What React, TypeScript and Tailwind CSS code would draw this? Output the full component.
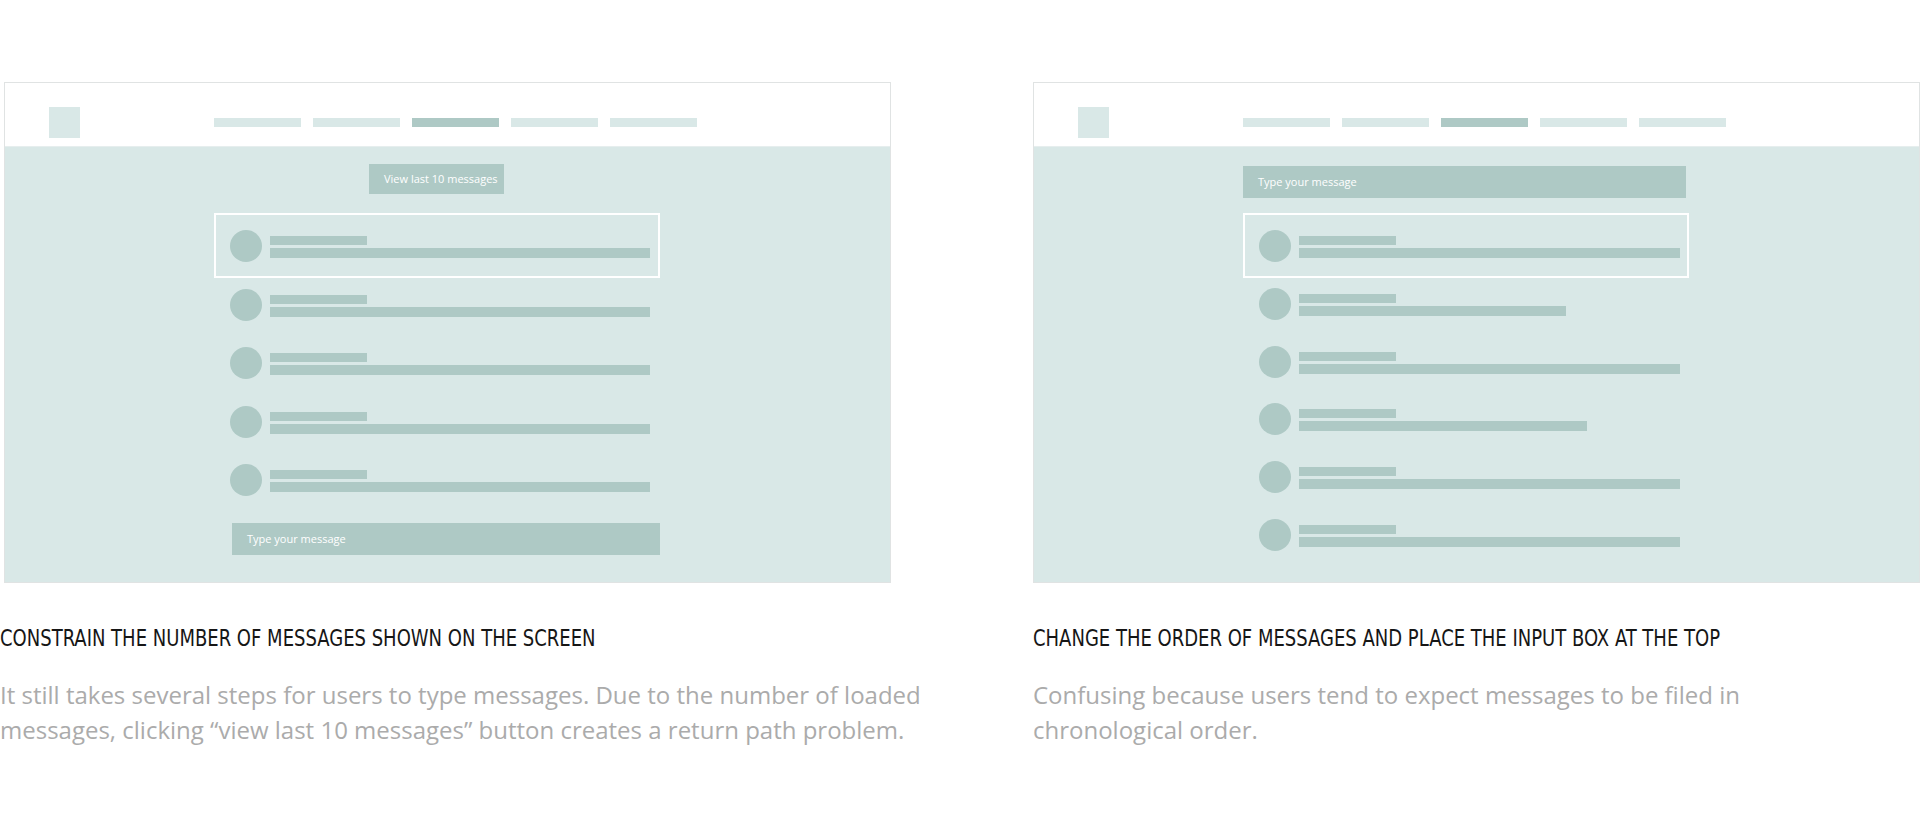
const TEAL = "bg-[#d9e8e7]";
const DARK = "bg-[#aec9c5]";

const Header = () => (
  <div className="h-[64px] pt-4 flex items-center bg-white border-b border-[#e6eeee]">
    <div className={`w-[31px] h-[31px] ml-[44px] ${TEAL}`} />
    <div className="flex gap-[12px] ml-[134px]">
      {[0, 1, 2, 3, 4].map((i) => (
        <div key={i} className={`w-[87px] h-[9px] ${i === 2 ? DARK : TEAL}`} />
      ))}
    </div>
  </div>
);

const MessageRow = ({ width, selected }: { width: number; selected?: boolean }) => (
  <div
    className={
      selected
        ? "w-[446px] -mt-[17px] -mb-[16px] pt-[15px] pb-[14px] pl-[14px] pr-[8px] border-2 border-white flex gap-[8px]"
        : "w-[446px] pl-[16px] pr-[10px] flex gap-[8px]"
    }
  >
    <div className={`w-[32px] h-[32px] rounded-full shrink-0 ${DARK}`} />
    <div className="flex flex-col pt-[6px] gap-[3px]">
      <div className={`w-[97px] h-[9px] ${DARK}`} />
      <div className={`h-[10px] ${DARK}`} style={{ width }} />
    </div>
  </div>
);

const Input = ({ w }: { w: string }) => (
  <div className={`${w} h-[32px] ${DARK} flex items-center pl-[15px] text-[11px] text-white font-['Open_Sans',sans-serif]`}>
    Type your message
  </div>
);

const Frame = ({ children }: { children: React.ReactNode }) => (
  <div className={`w-[887px] h-[501px] border border-[#e0e3e3] ${TEAL} flex flex-col`}>
    <Header />
    {children}
  </div>
);

const Caption = ({ title, lines }: { title: string; lines: string[] }) => (
  <div className="mt-[40px]">
    <h3 className="text-[23px] leading-[30px] text-[#161616] font-['DejaVu_Sans_Condensed','DejaVu_Sans',sans-serif] [font-stretch:condensed] font-light whitespace-nowrap scale-x-[0.87] origin-left">
      {title}
    </h3>
    <p className="mt-[24px] text-[24px] leading-[35px] text-[#ababab] font-['Open_Sans',sans-serif] whitespace-nowrap">
      {lines.map((l, i) => (
        <span key={i} className="block">{l}</span>
      ))}
    </p>
  </div>
);

export default function App() {
  return (
    <div className="w-[1920px] h-[820px] bg-white flex pt-[82px] overflow-hidden">
      <div className="w-[1033px] shrink-0">
        <div className="ml-[4px]">
          <Frame>
            <div className="pl-[209px] pt-[17px] flex flex-col">
              <div className={`ml-[155px] w-[135px] h-[30px] ${DARK} flex items-center pl-[15px] text-[11px] text-white font-['Open_Sans',sans-serif]`}>
                View last 10 messages
              </div>
              <div className="mt-[36px] flex flex-col gap-[26.5px]">
                <MessageRow width={380} selected />
                <MessageRow width={380} />
                <MessageRow width={380} />
                <MessageRow width={380} />
                <MessageRow width={380} />
              </div>
              <div className="mt-[27px] ml-[18px]">
                <Input w="w-[428px]" />
              </div>
            </div>
          </Frame>
        </div>
        <Caption
          title="CONSTRAIN THE NUMBER OF MESSAGES SHOWN ON THE SCREEN"
          lines={[
            "It still takes several steps for users to type messages. Due to the number of loaded",
            "messages, clicking \u201cview last 10 messages\u201d button creates a return path problem.",
          ]}
        />
      </div>
      <div className="flex-1">
        <Frame>
          <div className="pl-[209px] pt-[19px] flex flex-col">
            <Input w="w-[443px]" />
            <div className="mt-[32px] flex flex-col gap-[25.8px]">
              <MessageRow width={381} selected />
              <MessageRow width={267} />
              <MessageRow width={381} />
              <MessageRow width={288} />
              <MessageRow width={381} />
              <MessageRow width={381} />
            </div>
          </div>
        </Frame>
        <Caption
          title="CHANGE THE ORDER OF MESSAGES AND PLACE THE INPUT BOX AT THE TOP"
          lines={[
            "Confusing because users tend to expect messages to be filed in",
            "chronological order.",
          ]}
        />
      </div>
    </div>
  );
}
